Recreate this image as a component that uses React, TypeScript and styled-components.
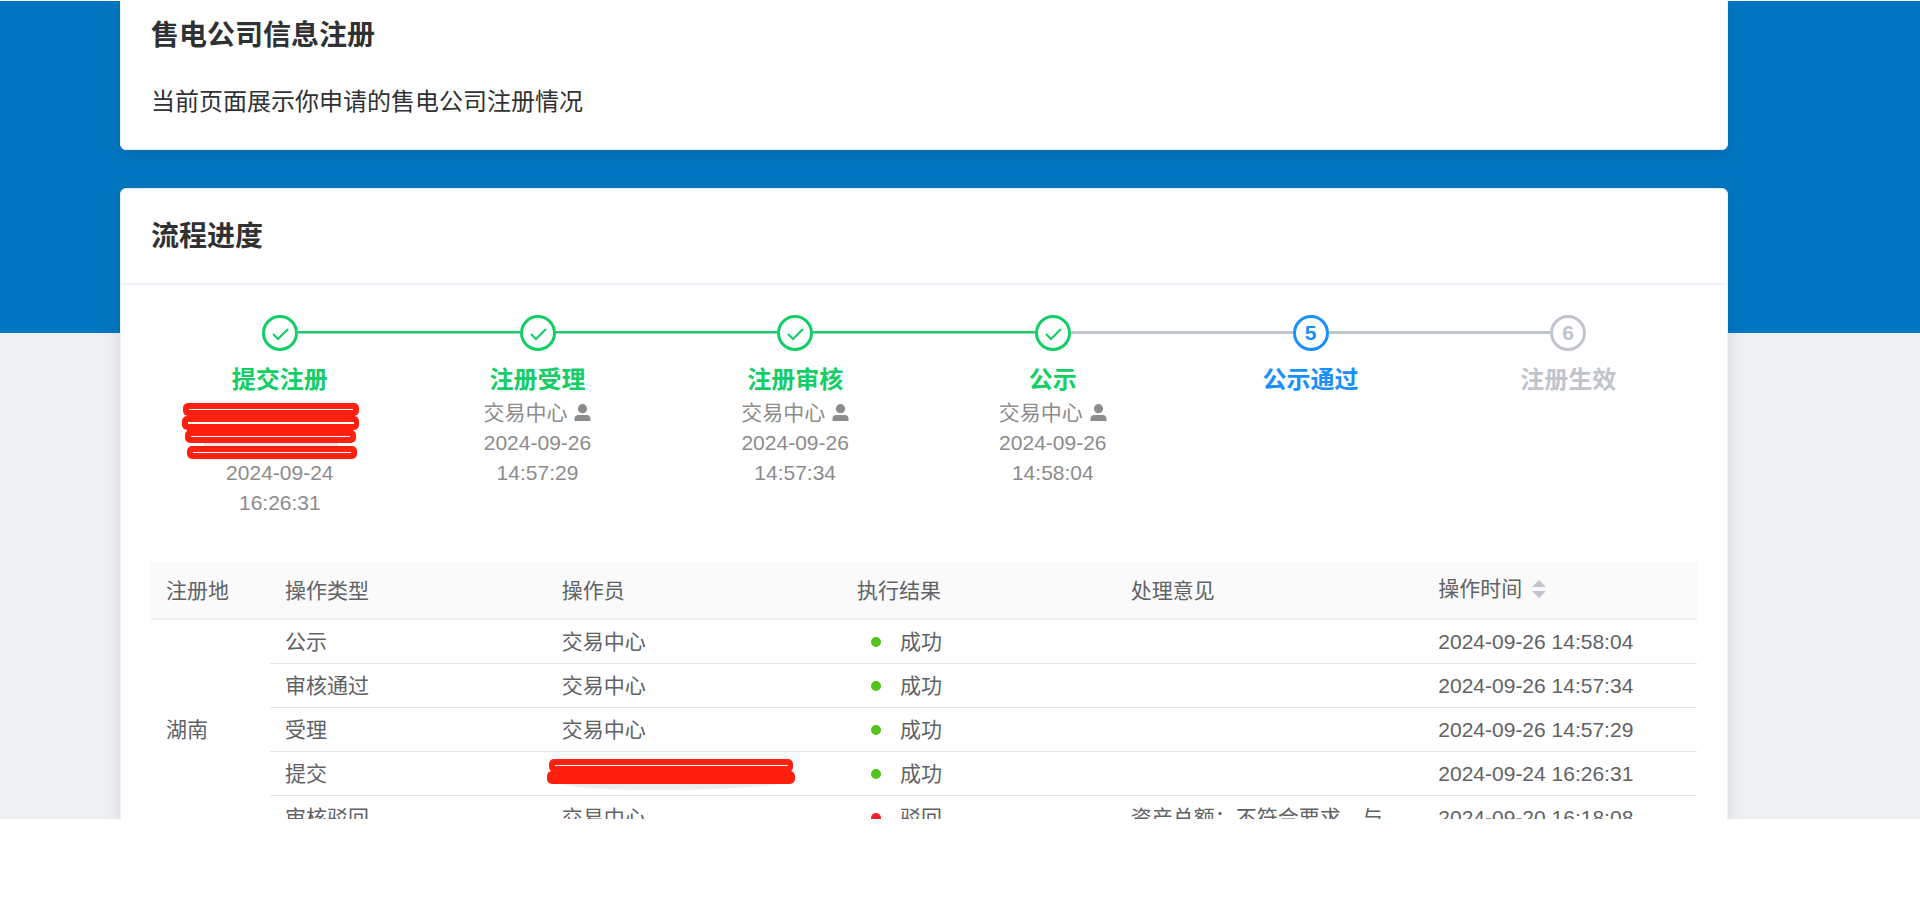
import React from "react";
import styled, { createGlobalStyle } from "styled-components";

const GlobalStyle = createGlobalStyle`
  * { box-sizing: border-box; }
  body {
    margin: 0;
    background: #fff;
    color: #606266;
    font-family: "Liberation Sans", "Noto Sans CJK SC", sans-serif;
    font-size: 21px;
    line-height: 30px;
  }
`;

const Viewport = styled.div`
  height: 819px;
  overflow: hidden;
  border-top: 1px solid #fff;
  background: linear-gradient(#0076c0 332px, #eff0f4 332px);
`;

const Page = styled.main`
  display: flex;
  flex-direction: column;
  gap: 38px;
  padding: 0 192px 0 120px;
`;

const Card = styled.section`
  background: #fff;
  border: 1px solid #ebeef5;
  border-radius: 6px;
  box-shadow: 0 3px 18px rgba(0, 0, 0, 0.1);
`;

const IntroCard = styled(Card)`
  border-top: 0;
  border-radius: 0 0 6px 6px;
  padding: 15px 30px 27px;
`;

const Title = styled.h1`
  margin: 0;
  font-size: 28px;
  line-height: 40px;
  color: #303133;
`;

const Subtitle = styled.p`
  margin: 26px 0 0;
  font-size: 24px;
  line-height: 40px;
  color: #303133;
`;

const CardHeader = styled.header`
  padding: 28px 30px 26px;
  border-bottom: 2px solid #eff1f8;
`;

const CardBody = styled.div`
  padding: 30px 30px 40px;
`;

type Status = "done" | "current" | "waiting";
const statusColor: Record<Status, string> = {
  done: "#13ce66",
  current: "#1890ff",
  waiting: "#c0c4cc",
};

const Steps = styled.ol`
  display: grid;
  grid-template-columns: repeat(6, 1fr);
  margin: 0;
  padding: 0;
  min-height: 247px;
  list-style: none;
`;

const StepItem = styled.li`
  display: flex;
  flex-direction: column;
  align-items: center;
  text-align: center;
`;

const Track = styled.div`
  display: flex;
  align-items: center;
  align-self: stretch;
`;

const Line = styled.span<{ $kind: "none" | "done" | "todo" }>`
  flex: 1;
  height: 3px;
  margin-bottom: 2px;
  background: ${(p) =>
    p.$kind === "none"
      ? "transparent"
      : p.$kind === "done"
        ? "linear-gradient(#13ce66 2px, #a9d8c0 2px)"
        : "#c0c4cc"};
`;

const Marker = styled.span<{ $status: Status }>`
  display: flex;
  align-items: center;
  justify-content: center;
  width: 36px;
  height: 36px;
  border: 3px solid ${(p) => statusColor[p.$status]};
  border-radius: 50%;
  color: ${(p) => statusColor[p.$status]};
  font-weight: 700;
`;

const StepTitle = styled.h3<{ $status: Status }>`
  margin: 11px 0 0;
  font-size: 24px;
  line-height: 36px;
  color: ${(p) => statusColor[p.$status]};
`;

const StepInfo = styled.div`
  display: flex;
  flex-direction: column;
  align-items: center;
  color: #8c8c8c;
`;

const Operator = styled.span`
  display: flex;
  align-items: center;
  gap: 7px;
`;

const HiddenName = styled.span`
  display: flex;
  justify-content: center;
  height: 60px;
`;

const Scribble = styled.svg`
  display: block;
  flex: none;
`;

const Table = styled.table`
  width: 100%;
  table-layout: fixed;
  border-collapse: separate;
  border-spacing: 0;
`;

const Th = styled.th`
  height: 58px;
  padding: 2px 15px 0;
  background: #fafafa;
  border-bottom: 2px solid #ebeff4;
  font-weight: 400;
  text-align: left;
`;

const Td = styled.td`
  height: 44px;
  padding: 0 15px;
  border-bottom: 1px solid #dfe6ec;
  white-space: nowrap;
`;

const SortButton = styled.button`
  display: flex;
  align-items: center;
  gap: 10px;
  padding: 0 0 4px;
  border: 0;
  background: none;
  color: inherit;
  font: inherit;
`;

const Result = styled.span`
  display: flex;
  align-items: center;
  gap: 19px;
  padding-left: 14px;
`;

const Dot = styled.i<{ $ok: boolean }>`
  width: 10px;
  height: 10px;
  border-radius: 50%;
  background: ${(p) => (p.$ok ? "#52c41a" : "#f5222d")};
`;

const CheckIcon = () => (
  <svg width="20" height="20" viewBox="0 0 20 20" fill="none" aria-hidden="true">
    <path d="M3 11l5 5L18 6" stroke="#13ce66" strokeWidth="2" />
  </svg>
);

const UserIcon = () => (
  <svg width="17" height="18" viewBox="0 0 17 18" fill="#8c8c8c" aria-hidden="true">
    <circle cx="8.5" cy="4.7" r="4.6" />
    <path d="M0.5 17v-2a4 4 0 0 1 4-4h8a4 4 0 0 1 4 4v2z" />
  </svg>
);

const SortIcon = () => (
  <svg width="14" height="20" viewBox="0 0 14 20" fill="#c0c4cc" aria-hidden="true">
    <path d="M0 8L7 1l7 7zM0 12h14l-7 7z" />
  </svg>
);

const NameScribble = () => (
  <Scribble width="196" height="61" viewBox="0 0 196 61" aria-hidden="true">
    <path d="M22 45h134v4H22z" fill="#e8e8e8" />
    <g fill="#ff2010">
      <rect x="1" y="5" width="176" height="13" rx="5" />
      <rect x="0" y="18" width="177" height="14" rx="5" />
      <rect x="5" y="15" width="168" height="6" />
      <rect x="3" y="32" width="171" height="13" rx="5" />
      <rect x="5" y="28" width="166" height="6" />
      <rect x="5" y="48" width="170" height="13" rx="5" />
    </g>
    <path d="M7 11.500h164M9 38.500h159M11 54.500h158" stroke="#fff" />
    <path d="M6 25h166" stroke="#fff" strokeWidth="2" />
  </Scribble>
);

const CompanyScribble = () => (
  <Scribble width="252" height="36" viewBox="0 0 252 36" aria-hidden="true">
    <path d="M16 28q24 6 96 6t122-6z" fill="#ededed" />
    <rect x="2" y="3" width="244" height="13" rx="5" fill="#ff2010" />
    <rect x="0" y="15" width="248" height="13" rx="5" fill="#ff2010" />
    <rect x="5" y="12" width="238" height="6" fill="#ff2010" />
    <path d="M8 9.500h233" stroke="#fff" />
  </Scribble>
);

const ScribbleCell = styled(Td)`
  padding: 0;
`;

interface Step {
  title: string;
  status: Status;
  date?: string;
  time?: string;
  operator?: string;
}

const steps: Step[] = [
  { title: "提交注册", status: "done", date: "2024-09-24", time: "16:26:31" },
  { title: "注册受理", status: "done", operator: "交易中心", date: "2024-09-26", time: "14:57:29" },
  { title: "注册审核", status: "done", operator: "交易中心", date: "2024-09-26", time: "14:57:34" },
  { title: "公示", status: "done", operator: "交易中心", date: "2024-09-26", time: "14:58:04" },
  { title: "公示通过", status: "current" },
  { title: "注册生效", status: "waiting" },
];

const records = [
  { type: "公示", operator: "交易中心", ok: true, comment: "", time: "2024-09-26 14:58:04" },
  { type: "审核通过", operator: "交易中心", ok: true, comment: "", time: "2024-09-26 14:57:34" },
  { type: "受理", operator: "交易中心", ok: true, comment: "", time: "2024-09-26 14:57:29" },
  { type: "提交", operator: null, ok: true, comment: "", time: "2024-09-24 16:26:31" },
  { type: "审核驳回", operator: "交易中心", ok: false, comment: "资产总额：不符合要求，与", time: "2024-09-20 16:18:08" },
];

const columns = ["7.7%", "17.9%", "19.1%", "17.7%", "19.9%", "17.7%"];

const lineKind = (from: number) =>
  from < 0 || from >= steps.length - 1
    ? "none"
    : steps[from + 1].status === "done"
      ? "done"
      : "todo";

export default function App() {
  return (
    <>
      <GlobalStyle />
      <Viewport>
        <Page>
          <IntroCard>
            <Title>售电公司信息注册</Title>
            <Subtitle>当前页面展示你申请的售电公司注册情况</Subtitle>
          </IntroCard>
          <Card>
            <CardHeader>
              <Title as="h2">流程进度</Title>
            </CardHeader>
            <CardBody>
              <Steps>
                {steps.map((step, i) => (
                  <StepItem key={step.title}>
                    <Track>
                      <Line $kind={lineKind(i - 1)} />
                      <Marker $status={step.status}>
                        {step.status === "done" ? <CheckIcon /> : i + 1}
                      </Marker>
                      <Line $kind={lineKind(i)} />
                    </Track>
                    <StepTitle $status={step.status}>{step.title}</StepTitle>
                    {step.date && (
                      <StepInfo>
                        {step.operator ? (
                          <Operator>
                            {step.operator}
                            <UserIcon />
                          </Operator>
                        ) : (
                          <HiddenName>
                            <NameScribble />
                          </HiddenName>
                        )}
                        <span>{step.date}</span>
                        <span>{step.time}</span>
                      </StepInfo>
                    )}
                  </StepItem>
                ))}
              </Steps>
              <Table>
                <colgroup>
                  {columns.map((width, i) => (
                    <col key={i} width={width} />
                  ))}
                </colgroup>
                <thead>
                  <tr>
                    <Th>注册地</Th>
                    <Th>操作类型</Th>
                    <Th>操作员</Th>
                    <Th>执行结果</Th>
                    <Th>处理意见</Th>
                    <Th>
                      <SortButton type="button">
                        操作时间
                        <SortIcon />
                      </SortButton>
                    </Th>
                  </tr>
                </thead>
                <tbody>
                  {records.map((record, i) => (
                    <tr key={record.time}>
                      {i === 0 && <Td rowSpan={records.length}>湖南</Td>}
                      <Td>{record.type}</Td>
                      {record.operator ? (
                        <Td>{record.operator}</Td>
                      ) : (
                        <ScribbleCell>
                          <CompanyScribble />
                        </ScribbleCell>
                      )}
                      <Td>
                        <Result>
                          <Dot $ok={record.ok} />
                          {record.ok ? "成功" : "驳回"}
                        </Result>
                      </Td>
                      <Td>{record.comment}</Td>
                      <Td>{record.time}</Td>
                    </tr>
                  ))}
                </tbody>
              </Table>
            </CardBody>
          </Card>
        </Page>
      </Viewport>
    </>
  );
}
